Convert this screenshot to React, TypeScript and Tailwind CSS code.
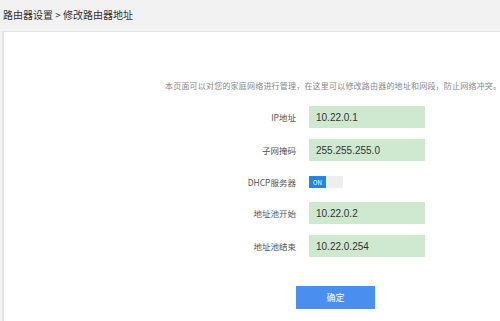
import React from "react";

const font = { fontFamily: '"Noto Sans CJK SC", "Liberation Sans", sans-serif' };

function Row({ label, value }: { label: string; value: string }) {
  return (
    <div className="flex items-center h-[22px]">
      <div className="w-[292px] text-right text-[8.5px] text-[#555]">{label}</div>
      <div className="ml-[13px] w-[116px] h-[22px] bg-[#cfe9d1] flex items-center pl-[7px] text-[10px] text-[#333]" style={{ fontFamily: '"Liberation Sans", sans-serif' }}>
        {value}
      </div>
    </div>
  );
}

export default function App() {
  return (
    <div className="w-[500px] h-[321px] bg-[#f2f2f2] flex flex-col overflow-hidden" style={font}>
      <div className="h-[31px] flex items-center pl-[3px] pb-[2px] text-[10px] text-[#333] whitespace-pre">
        路由器设置 &gt; 修改路由器地址
      </div>
      <div className="flex-1 ml-[2px] bg-white border-l-[2px] border-t border-[#e6e6e6] flex flex-col">
        <div className="mt-[48px] pl-[161px] text-[8px] tracking-[0.2px] text-[#888] whitespace-nowrap leading-[12px]">
          本页面可以对您的家庭网络进行管理，在这里可以修改路由器的地址和网段，防止网络冲突。
        </div>
        <div className="mt-[14px] flex flex-col">
          <Row label="IP地址" value="10.22.0.1" />
          <div className="h-[11px]" />
          <Row label="子网掩码" value="255.255.255.0" />
          <div className="flex items-center h-[12px] mt-[15px]">
            <div className="w-[292px] text-right text-[8.5px] text-[#555]">DHCP服务器</div>
            <div className="ml-[13px] flex h-[12px]">
              <div className="w-[17px] h-[12px] bg-[#1e88e5] text-white text-[6px] flex items-center justify-center">ON</div>
              <div className="w-[17px] h-[12px] bg-[#eeeeee]" />
            </div>
          </div>
          <div className="h-[14px]" />
          <Row label="地址池开始" value="10.22.0.2" />
          <div className="h-[11px]" />
          <Row label="地址池结束" value="10.22.0.254" />
        </div>
        <div className="mt-[29px] pl-[292px]">
          <div className="w-[79px] h-[23px] bg-[#4a8ff0] text-white text-[9px] flex items-center justify-center">确定</div>
        </div>
      </div>
    </div>
  );
}
